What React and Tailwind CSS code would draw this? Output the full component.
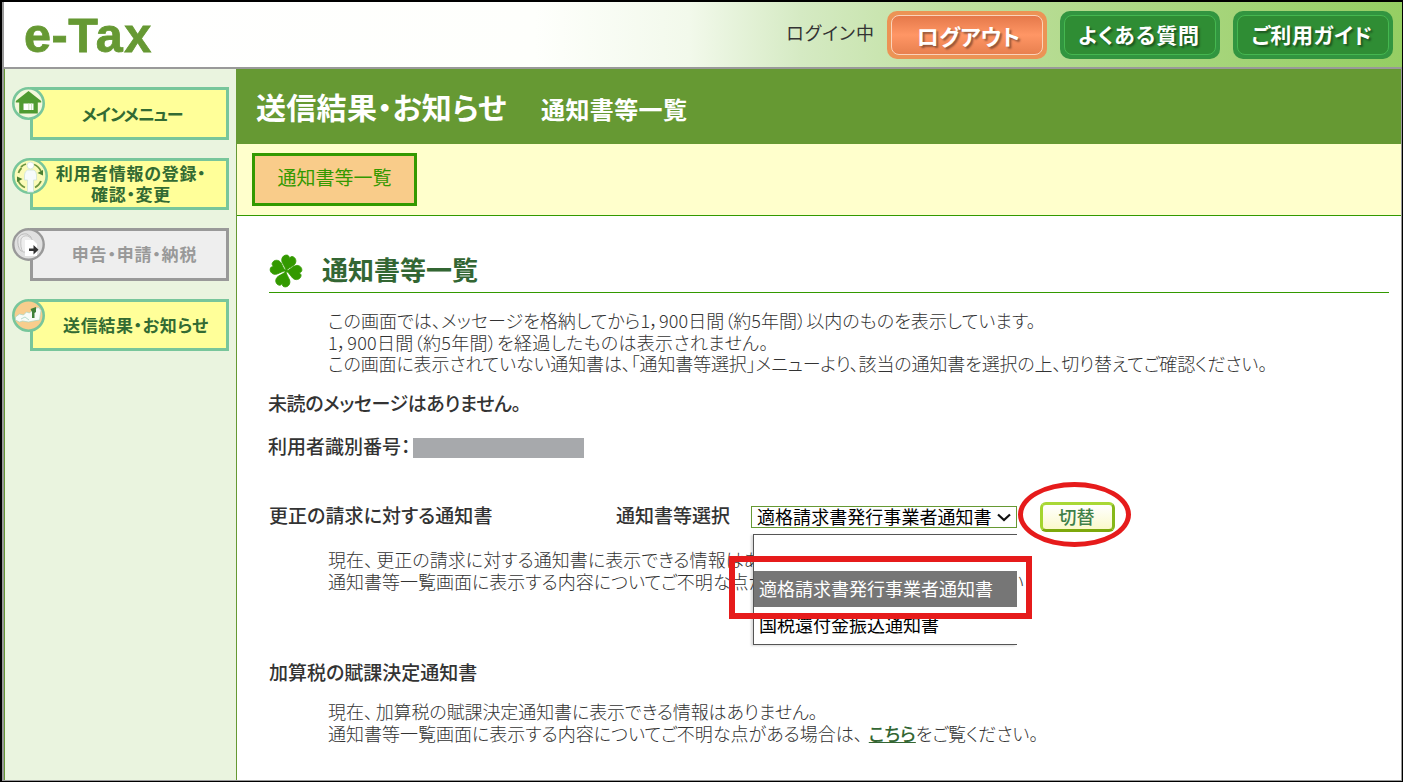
import clsx from "clsx";

const OPTIONS = ["", "適格請求書発行事業者通知書", "国税還付金振込通知書"];
const SELECTED = "適格請求書発行事業者通知書";

const MENU = [
  { id: "home", lines: ["メインメニュー"], text: "text-[17px] tracking-[-1.1px]", box: "h-[53px] pl-[5px] pb-[1px]", Icon: HomeBadge },
  { id: "user", lines: ["利用者情報の登録・", "確認・変更"], text: "text-[17px] tracking-[0.7px]", box: "h-[52px] pl-[3px] pb-[1px]", Icon: UserBadge },
  { id: "filing", lines: ["申告・申請・納税"], text: "text-[17px] tracking-[0.8px]", box: "h-[53px] pl-[10px] pb-[2px]", Icon: FilingBadge, disabled: true },
  { id: "result", lines: ["送信結果・お知らせ"], text: "text-[17px] tracking-[0.6px]", box: "h-[52px] pl-[13px] pb-[2px]", Icon: ResultBadge }
];

const LEAF = "M0 0C-1-3-3.500-4.500-6-7.500-8.500-11-6.500-15-3.500-15.500-2-16-.5-15 0-13 .5-15 2-16 3.500-15.500 6.500-15 8.500-11 6-7.500 3.500-4.500 1-3 0 0z";

function HomeBadge() {
  return (
    <svg className="h-[33px] w-[33px]" viewBox="0 0 33 33">
      <circle cx="16.5" cy="16.5" fill="#f4f8dc" r="15.2" stroke="#78c69b" strokeWidth="2.6" />
      <path d="M16.5 4 3.8 14v1.6h3.4V26.5h18.6V15.6h3.4V14z" fill="#4f9a31" />
      <path d="M11.5 16.5h10v6.5h-10z" fill="#fff" />
      <path d="M16.8 16.5v6.5M19.5 16.5v6.5" stroke="#cfe5c4" />
    </svg>
  );
}

function UserBadge() {
  return (
    <svg className="h-[36px] w-[36px]" viewBox="0 0 36 36">
      <circle cx="18" cy="18" fill="#fbfbb8" r="16.7" stroke="#78c69b" strokeWidth="2.6" />
      <path d="M9 9a12.500 12.500 0 0 1 5-3M22 6.500a12.500 12.500 0 0 1 7 7M6 22a12.500 12.500 0 0 0 7 7.500M23 29.500a12.500 12.500 0 0 0 6-6.500M6.500 15q1-3 3-5" fill="none" stroke="#6d9440" strokeWidth="1.8" />
      <path d="m25.500 15 5.500-3v5.500zM10.500 21 5 24v-5.500z" fill="#4b7f31" />
      <circle cx="18.5" cy="7.5" fill="#fff" r="3.4" stroke="#cfe3d8" strokeWidth=".8" />
      <path d="M15.500 12h6.500q2.500 1.500 2.500 5v5h-3v12h-6V22h-3v-5q0-3.500 3-5z" fill="#f6fbfb" stroke="#cfe3d8" strokeWidth=".8" />
    </svg>
  );
}

function FilingBadge() {
  return (
    <svg className="h-[33px] w-[33px]" viewBox="0 0 33 33">
      <circle cx="16.5" cy="16.5" fill="#e0e0e0" r="15.2" stroke="#999" strokeWidth="2.4" />
      <path d="M6 10q3-5 9-4l4 3v14H9q-4-4-3-13z" fill="#e8e8e8" stroke="#bbb" />
      <path d="M9 11q2-4 7-3l4 3v13h-9q-3-4-2-13z" fill="#eee" stroke="#c4c4c4" />
      <path d="M13 12h8l4 4v12H13z" fill="#fff" />
      <path d="M17 20.5h4.500V17l5 4.800-5 4.700v-3.500H17z" fill="#333" />
    </svg>
  );
}

function ResultBadge() {
  return (
    <svg className="h-[33px] w-[33px]" viewBox="0 0 33 33">
      <circle cx="16.5" cy="16.5" fill="#f8cd8d" r="15.2" stroke="#78c69b" strokeWidth="2.6" />
      <path d="m3.500 18 4-3 4 1 3-3 3 1 4-4 5-1.500 2.500 3-1.500 9.500-6 1-5 1-6-1-3 1-4-2z" fill="#f7fbf7" stroke="#a9d6c0" strokeWidth=".7" />
      <path d="m9 20 4-2 4 3" fill="none" stroke="#b5dccb" />
      <path d="m18.500 10 5.500-2v5l-1.500 1v5H20v-6z" fill="#3f8038" />
    </svg>
  );
}

function Clover() {
  return (
    <svg className="h-[34px] w-[34px] shrink-0" viewBox="-17 -17 34 34">
      <g fill="#390" stroke="#390" strokeWidth=".8">
        <path d={LEAF} transform="rotate(15)" />
        <path d={LEAF} transform="rotate(-70)" />
        <path d={LEAF} transform="rotate(98)" />
        <path d={LEAF} transform="rotate(197)" />
      </g>
    </svg>
  );
}

function HeaderButton({ label, className, inner, text }) {
  return (
    <button className={clsx("h-[48px] w-[160px] rounded-[10px] p-[4px]", className)} type="button">
      <span className={clsx("flex h-full items-center justify-center rounded-[8px] border font-bold text-white [text-shadow:2px_2px_2px_rgba(0,0,0,0.4)]", inner)}>
        <span className={text}>{label}</span>
      </span>
    </button>
  );
}

function MenuItem({ item }) {
  const { lines, text, box, Icon, disabled } = item;
  return (
    <div className="relative h-[70.7px] pt-[1px] pl-[25px]">
      <div
        className={clsx(
          "flex w-[199px] flex-col items-center justify-center border-[3px] leading-[21px] font-bold",
          box,
          disabled ? "border-[#999] bg-[#eee] text-[#999]" : "border-[#78c69b] bg-[#ff9] text-[#336b33]"
        )}
      >
        {lines.map((line) => (
          <span className={clsx("whitespace-nowrap", text)} key={line}>
            {line}
          </span>
        ))}
      </div>
      <span className="absolute top-[1px] left-[7px]">
        <Icon />
      </span>
    </div>
  );
}

function Line({ children, className }) {
  return <p className={clsx("h-[21.5px] whitespace-nowrap", className)}>{children}</p>;
}

function NoticeSelect() {
  return (
    <div className="relative ml-[21px] h-[22px] w-[266px]">
      <div className="flex h-full items-center border border-[#693] bg-white pb-[2px] pl-[5px] text-[18px] tracking-[0.05px] text-black">
        <span className="whitespace-nowrap">{SELECTED}</span>
        <svg className="mt-[2px] ml-[5px] h-[9px] w-[14px] shrink-0" viewBox="0 0 14 9">
          <path d="m1 1.5 6 5.5 6-5.5" fill="none" stroke="#111" strokeWidth="2.2" />
        </svg>
      </div>
      <ul className="absolute top-[28px] left-[2px] h-[111px] w-[264px] border-y border-l border-[#555] bg-white text-[18px] leading-[34px] text-black shadow-[-2px_1px_2px_rgba(0,0,0,0.15)]">
        {OPTIONS.map((option) => (
          <li
            className={clsx("h-[36px] pl-[5px] whitespace-nowrap", option === SELECTED && "bg-[#767676] text-white")}
            key={option}
          >
            {option}
          </li>
        ))}
      </ul>
      <div className="absolute top-[50px] left-[-22px] h-[63px] w-[303px] border-[6px] border-[#e61b1b]" />
    </div>
  );
}

function SwitchButton() {
  return (
    <div className="relative ml-[23px] h-[30px] w-[75px]">
      <button
        className="h-full w-full rounded-[6px] border-[3px] border-t-[#a9d836] border-r-[#86b81a] border-b-[#7da80c] border-l-[#a4d52e] bg-linear-to-b from-white to-[#fbf9cb] pr-[2px] pb-[2px] text-[18px] leading-[22px] font-medium text-[#3f8048]"
        type="button"
      >
        切替
      </button>
      <div className="absolute top-[-20px] left-[-22px] h-[65px] w-[113px] rounded-[50%] border-[5px] border-[#e61b1b]" />
    </div>
  );
}

export default function App() {
  return (
    <div className="flex h-[782px] w-[1403px] flex-col overflow-hidden border-t-2 border-r border-b border-l-2 border-black bg-white font-['Noto_Sans_CJK_JP',sans-serif] text-[#333] [font-feature-settings:'palt']">
      <header className="flex h-[67px] shrink-0 items-start border-b-2 border-l-2 border-[#999] bg-[linear-gradient(90deg,#fff_0%,#fefffc_38%,#f2f9eb_49%,#d5eac3_57%,#bfe09f_68%,#a9d67f_84%,#95ce63_100%)]">
        <div className="ml-[20px] font-['Liberation_Sans',sans-serif] text-[48.5px] leading-[66px] font-bold tracking-[0.5px] text-[#693] [-webkit-text-stroke:0.8px_#693]">
          e-<span className="tracking-[1.6px]">Tax</span>
        </div>
        <div className="mt-[9px] mr-[9px] ml-auto flex">
          <span className="mr-[12px] text-[18px] leading-[43px] tracking-[1px]">ログイン中</span>
          <HeaderButton
            className="bg-[#ec9355]"
            inner="border-[#fbd3bb] bg-linear-to-b from-[#e5794a] via-[#ff9665] to-[#e8804f]"
            label="ログアウト"
            text="pl-[3px] text-[22px] tracking-[0.1px]"
          />
          <HeaderButton
            className="ml-[13px] bg-[#329540]"
            inner="border-[#45b750] bg-[#2f8d34]"
            label="よくある質問"
            text="pr-[2px] text-[21px] tracking-[0.9px]"
          />
          <HeaderButton
            className="ml-[13px] bg-[#329540]"
            inner="border-[#45b750] bg-[#2f8d34]"
            label="ご利用ガイド"
            text="pr-[2px] text-[21px] tracking-[0.6px]"
          />
        </div>
      </header>

      <div className="flex min-h-0 flex-1 border-r border-b border-l-2 border-[#999]">
        <nav className="w-[233px] shrink-0 border-x border-[#693] bg-[#eaf4df] pt-[17px]">
          {MENU.map((item) => (
            <MenuItem item={item} key={item.id} />
          ))}
        </nav>

        <main className="min-w-0 flex-1">
          <div className="flex h-[75px] items-center bg-[#693] pl-[19px] font-bold whitespace-nowrap text-white">
            <h1 className="w-[285px] pb-[1px] text-[30px] tracking-[0.3px]">送信結果・お知らせ</h1>
            <span className="pt-[5px] text-[24px] tracking-[0.4px]">通知書等一覧</span>
          </div>

          <div className="h-[72px] border-b border-[#390] bg-[#ffc] pt-[9px] pl-[15px]">
            <div className="flex h-[53px] w-[165px] items-center justify-center border-[3px] border-[#390] bg-[#f9cc8a] pb-[4px] text-[19px] text-[#390]">
              通知書等一覧
            </div>
          </div>

          <div className="pt-[34px] pl-[32px] text-[18px] leading-[20px]">
            <div className="flex h-[43px] w-[1120px] items-center border-b border-[#390]">
              <Clover />
              <h2 className="ml-[19px] pb-[4px] text-[26px] font-bold text-[#363]">通知書等一覧</h2>
            </div>

            <div className="mt-[17px] h-[66px] pl-[59px] font-light">
              <Line className="tracking-[0.05px]">この画面では、メッセージを格納してから1，900日間（約5年間）以内のものを表示しています。</Line>
              <Line className="tracking-[0.3px]">1，900日間（約5年間）を経過したものは表示されません。</Line>
              <Line className="tracking-[-0.13px]">この画面に表示されていない通知書は、「通知書等選択」メニューより、該当の通知書を選択の上、切り替えてご確認ください。</Line>
            </div>

            <p className="mt-[17px] -ml-px h-[22px] text-[19px] font-medium tracking-[-0.4px]">未読のメッセージはありません。</p>

            <div className="mt-[21px] -ml-px flex h-[22px] text-[19px] font-medium">
              <span className="w-[145px] shrink-0 whitespace-nowrap">利用者識別番号：</span>
              <span className="mt-[2px] h-[20px] w-[171px] bg-[#a7a9ac]" />
            </div>

            <section className="mt-[48px]">
              <div className="relative z-10 flex h-[22px] items-center">
                <h3 className="w-[347px] pb-[4px] text-[19px] font-medium tracking-[0.05px] whitespace-nowrap">更正の請求に対する通知書</h3>
                <span className="w-[114px] pb-[4px] text-[19px] font-medium whitespace-nowrap">通知書等選択</span>
                <NoticeSelect />
                <SwitchButton />
              </div>
              <div className="mt-[21px] h-[44px] pl-[59px] font-light">
                <Line className="tracking-[0.05px]">
                  <span className="mr-[3px]">現在、</span>更正の請求に対する通知書に表示できる情報はありません。
                </Line>
                <Line>通知書等一覧画面に表示する内容についてご不明な点がある場合は、こちらをご覧ください</Line>
              </div>
            </section>

            <section className="mt-[69px]">
              <h3 className="h-[22px] text-[19px] font-medium">加算税の賦課決定通知書</h3>
              <div className="mt-[17px] pl-[59px] font-light">
                <Line className="tracking-[-0.1px]">
                  <span className="mr-[3px]">現在、</span>加算税の賦課決定通知書に表示できる情報はありません。
                </Line>
                <Line>
                  <span className="mr-[6px]">通知書等一覧画面に表示する内容についてご不明な点がある場合は、</span>
                  <a className="font-medium text-[#363] underline" href="#contact">
                    こちら
                  </a>
                  <span className="tracking-[-0.1px]">をご覧ください。</span>
                </Line>
              </div>
            </section>
          </div>
        </main>
      </div>
    </div>
  );
}
